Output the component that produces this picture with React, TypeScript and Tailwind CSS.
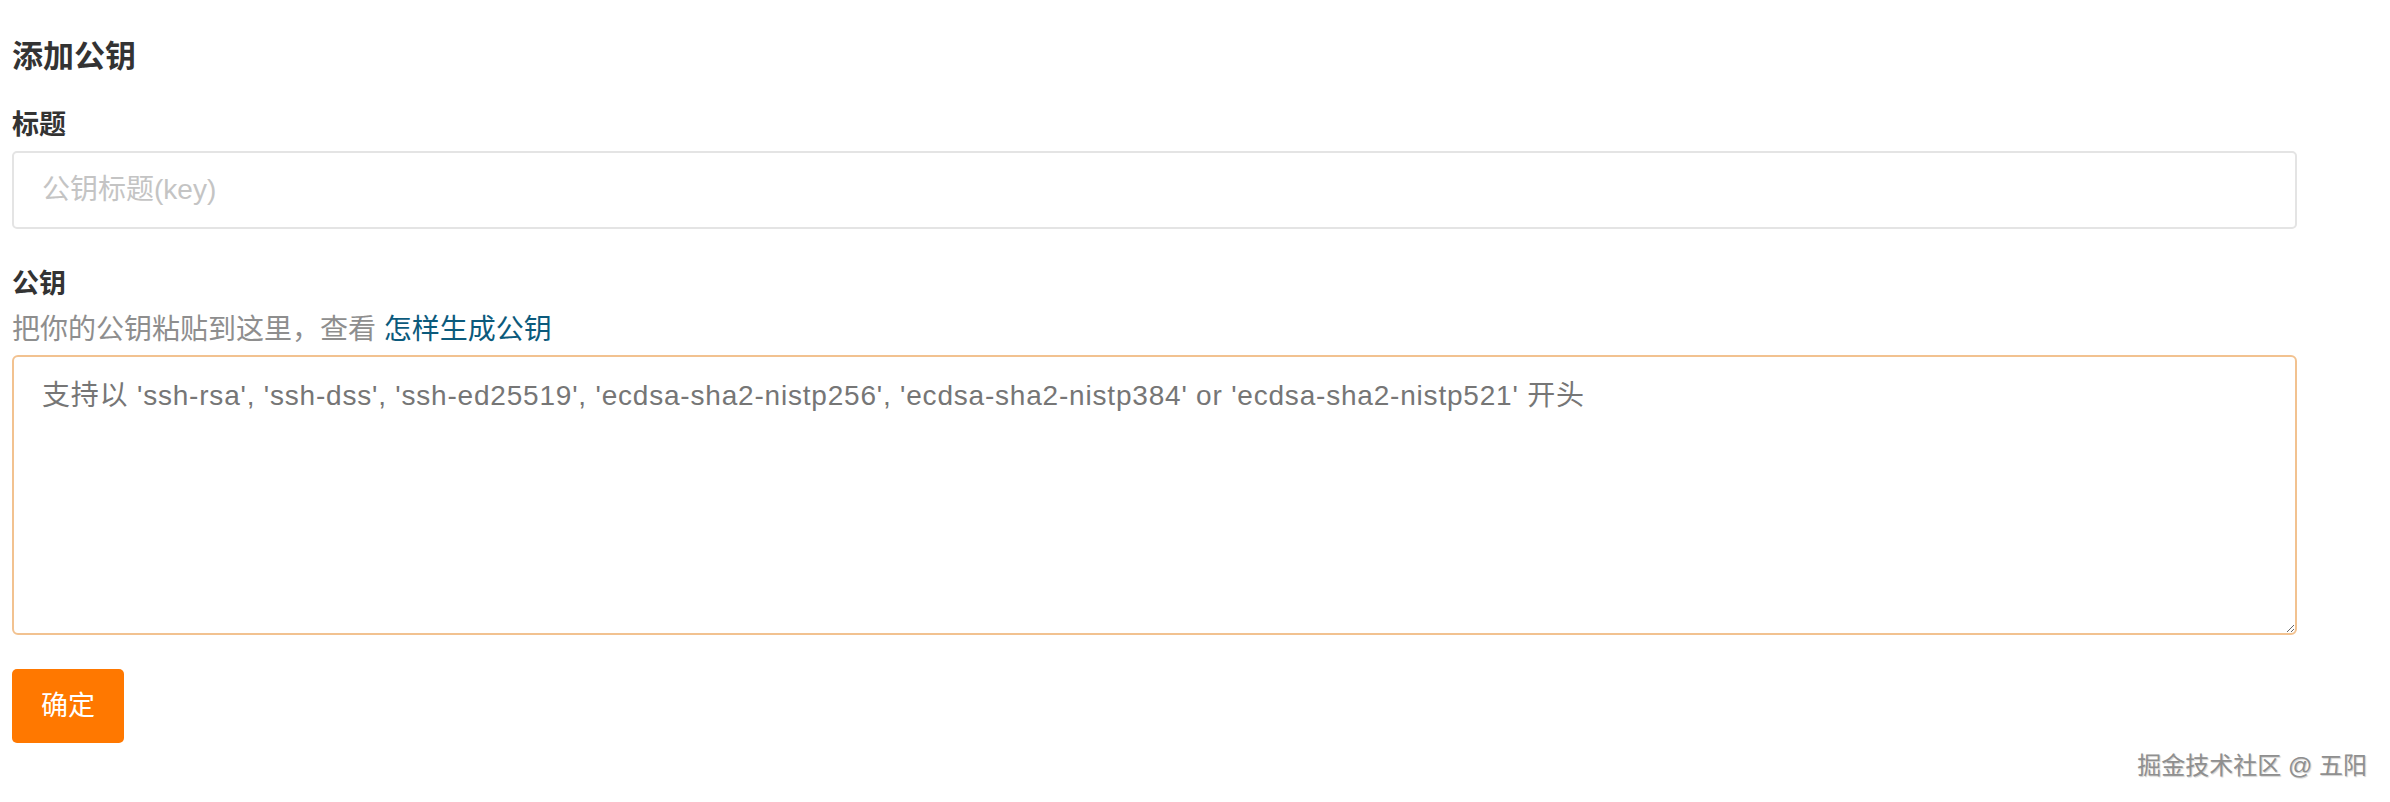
import React from "react";

const FONT = "font-['Liberation_Sans','Noto_Sans_CJK_SC',sans-serif]";

export default function App() {
  return (
    <div className={`relative min-h-[802px] bg-white pl-[12px] pr-[93px] ${FONT}`}>
      <h2 className="pt-[35px] text-[31px] font-bold leading-[44px] text-[#333]">添加公钥</h2>

      <label className="mt-[26px] block text-[27px] font-bold leading-[40px] text-[#333]">标题</label>
      <input
        type="text"
        placeholder="公钥标题(key)"
        className="mt-[6px] block h-[78px] w-full rounded-[5px] border-2 border-[#e4e4e4] px-[28px] text-[28px] text-[#333] outline-none placeholder:text-[#c4c4c4]"
      />

      <label className="mt-[35px] block text-[27px] font-bold leading-[40px] text-[#333]">公钥</label>
      <p className="mt-[6px] text-[28px] leading-[40px] text-[#8e8e8e]">
        把你的公钥粘贴到这里，查看 <a className="text-[#0b5a7c]">怎样生成公钥</a>
      </p>
      <textarea
        placeholder="支持以 'ssh-rsa', 'ssh-dss', 'ssh-ed25519', 'ecdsa-sha2-nistp256', 'ecdsa-sha2-nistp384' or 'ecdsa-sha2-nistp521' 开头"
        className="mt-[5px] block h-[280px] w-full rounded-[6px] border-2 border-[#f2c290] px-[28px] pt-[19px] text-[28px] leading-[40px] tracking-[0.8px] text-[#333] outline-none placeholder:text-[#767676]"
      />

      <button
        type="button"
        className="mt-[34px] h-[74px] w-[112px] rounded-[5px] bg-[#ff7800] text-[27px] text-white"
      >
        确定
      </button>

      <div className="absolute bottom-[18px] right-[23px] text-[24px] leading-[36px] text-[#8f8f8f] [text-shadow:1px_1px_1px_#d0d0d0,-1px_-1px_0_#ffffff]">
        掘金技术社区 @ 五阳
      </div>
    </div>
  );
}
